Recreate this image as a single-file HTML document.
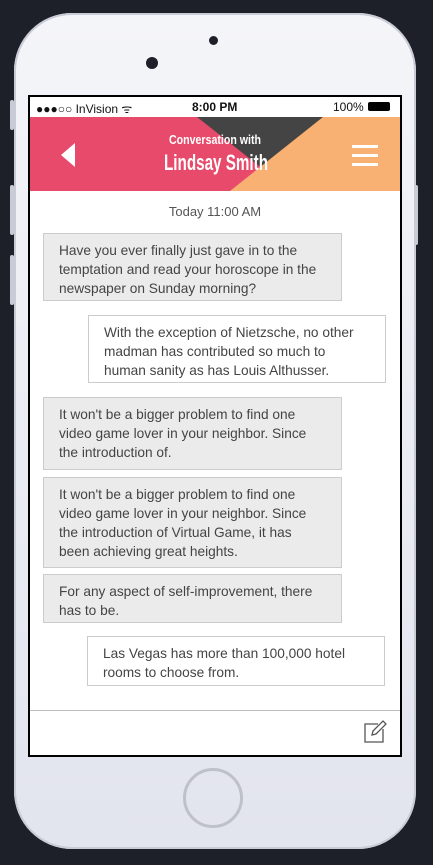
<!DOCTYPE html><html><head><style>
body{margin:0;width:433px;height:865px;background:#1d2029;position:relative;overflow:hidden;font-family:"Liberation Sans",sans-serif}
.phone{position:absolute;left:14px;top:13px;width:402px;height:836px;border-radius:58px;background:linear-gradient(#f4f5f9,#e2e4ee);box-shadow:inset 0 0 0 2px #c9ccd6}
.btn{position:absolute;background:#c9ccd6;width:4px;border-radius:2px}
.screen{position:absolute;left:28px;top:95px;width:370px;height:658px;border:2px solid #000;background:#fff;overflow:hidden}
.sb{height:20px;font-size:12px;color:#111;position:relative}
.hdr{position:absolute;top:20px;left:0;width:370px;height:74px}
.b{position:absolute;font-size:13.7px;line-height:19px;color:#444;padding:7px 0 7px 15px;box-sizing:border-box;border:1px solid #ccc;white-space:nowrap}
.g{background:#ebebeb;left:13px;width:299px}
.w{background:#fff;left:58px;width:298px}
</style></head><body>
<div class="phone"></div>
<div class="btn" style="left:10px;top:100px;height:30px"></div>
<div class="btn" style="left:10px;top:185px;height:50px"></div>
<div class="btn" style="left:10px;top:255px;height:50px"></div>
<div class="btn" style="left:414px;top:185px;height:60px"></div>
<div style="position:absolute;left:209px;top:36px;width:9px;height:9px;border-radius:50%;background:#1d2029"></div>
<div style="position:absolute;left:146px;top:57px;width:12px;height:12px;border-radius:50%;background:#1d2029"></div>
<div style="position:absolute;left:183px;top:768px;width:60px;height:60px;border-radius:50%;border:3px solid #bfc1c9;box-sizing:border-box"></div>
<div class="screen">
<div class="sb"><span style="position:absolute;left:6px;top:3px">●●●○○ InVision ᯤ</span><span style="position:absolute;left:162px;top:3px;font-weight:bold">8:00 PM</span><span style="position:absolute;left:303px;top:3px">100%</span><span style="position:absolute;left:338px;top:5px;width:22px;height:9px;background:#000;border-radius:2px"></span></div>
<svg class="hdr" viewBox="0 0 370 74"><rect width="370" height="74" fill="#e84a6b"/><polygon points="167,0 293,0 233,52" fill="#444"/><polygon points="293,0 370,0 370,74 200,74" fill="#f8b073"/>
<polygon points="31,38 45,26 45,50" fill="#fff"/><g fill="#fff"><rect x="322" y="28" width="26" height="3"/><rect x="322" y="37" width="26" height="3"/><rect x="322" y="46" width="26" height="3"/></g>
<text x="139" y="27" textLength="92" lengthAdjust="spacingAndGlyphs" fill="#fff" font-size="13" font-weight="bold">Conversation with</text>
<text x="134" y="53" textLength="104" lengthAdjust="spacingAndGlyphs" fill="#fff" font-size="22" font-weight="bold">Lindsay Smith</text></svg>
<div style="position:absolute;top:107px;width:370px;text-align:center;font-size:13px;color:#555">Today 11:00 AM</div>
<div class="b g" style="top:136px;height:68px">Have you ever finally just gave in to the<br>temptation and read your horoscope in the<br>newspaper on Sunday morning?</div>
<div class="b w" style="top:218px;height:68px">With the exception of Nietzsche, no other<br>madman has contributed so much to<br>human sanity as has Louis Althusser.</div>
<div class="b g" style="top:300px;height:73px">It won't be a bigger problem to find one<br>video game lover in your neighbor. Since<br>the introduction of.</div>
<div class="b g" style="top:380px;height:91px">It won't be a bigger problem to find one<br>video game lover in your neighbor. Since<br>the introduction of Virtual Game, it has<br>been achieving great heights.</div>
<div class="b g" style="top:477px;height:49px">For any aspect of self-improvement, there<br>has to be.</div>
<div class="b w" style="top:539px;height:50px;left:57px">Las Vegas has more than 100,000 hotel<br>rooms to choose from.</div>
<div style="position:absolute;top:613px;left:0;width:370px;height:1px;background:#bbb"></div>
<svg style="position:absolute;left:334px;top:622px" width="24" height="24" viewBox="0 0 24 24"><path d="M14 5H1v18h18V10" fill="none" stroke="#555" stroke-width="1.3"/><path d="M8 16l1-4 10-10 3 3-10 10z" fill="none" stroke="#555" stroke-width="1.3"/></svg>
</div>
</body></html>
